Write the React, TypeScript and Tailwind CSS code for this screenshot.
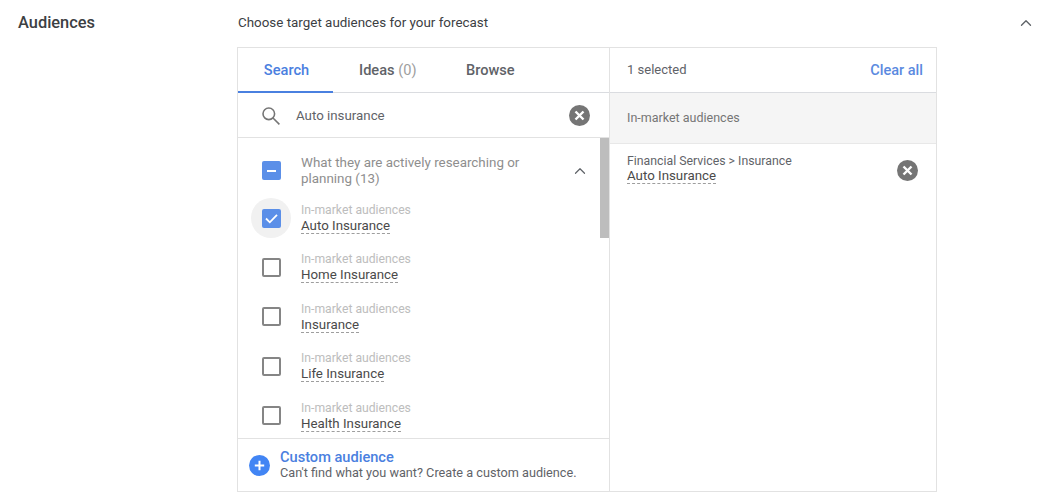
import { ChevronUp } from "lucide-react";

const items = [
  { name: "Auto Insurance", checked: true },
  { name: "Home Insurance", checked: false },
  { name: "Insurance", checked: false },
  { name: "Life Insurance", checked: false },
  { name: "Health Insurance", checked: false },
];

function CloseCircle() {
  return (
    <svg width="21" height="21" viewBox="0 0 21 21">
      <circle cx="10.5" cy="10.5" r="10.5" fill="#757575" />
      <path d="M6.5 6.5l8 8M14.5 6.5l-8 8" stroke="#fff" strokeWidth="2.4" fill="none" />
    </svg>
  );
}

function SearchIcon() {
  return (
    <svg width="20" height="20" viewBox="0 0 20 20" fill="none" stroke="#757575" strokeWidth="1.6">
      <circle cx="7.8" cy="7.8" r="5.8" />
      <path d="M12 12l6.4 6.4" />
    </svg>
  );
}

function Checkbox({ checked }: { checked: boolean }) {
  if (checked) {
    return (
      <div className="w-10 h-10 rounded-full bg-[#f1f1f1] flex items-center justify-center">
        <div className="w-[19px] h-[19px] rounded-[2px] bg-[#5b8fe8] flex items-center justify-center">
          <svg width="13" height="11" viewBox="0 0 13 11" fill="none" stroke="#fff" strokeWidth="1.8">
            <path d="M1 5.5l3.8 3.8L12 1.8" />
          </svg>
        </div>
      </div>
    );
  }
  return (
    <div className="w-10 h-10 flex items-center justify-center">
      <div className="w-[19px] h-[19px] rounded-[2px] border-2 border-[#858585]" />
    </div>
  );
}

export default function App() {
  return (
    <div className="w-[1046px] h-[496px] overflow-hidden bg-white font-['Roboto',sans-serif] flex">
      <div className="w-[238px] pl-[18px] pt-[13px] text-[16.4px] leading-[19px] font-medium text-[#3c4043]">Audiences</div>

      <div className="w-[699px] pt-[14px]">
        <div className="text-[13.4px] leading-[18px] text-[#3c4043]">Choose target audiences for your forecast</div>

        <div className="ml-[-1px] mt-[15px] w-[700px] h-[445px] border border-[#e2e2e2] flex">
          <div className="w-[372px] border-r border-[#e2e2e2] flex flex-col">
            <div className="h-[45px] flex border-b border-[#dadce0] text-[14.6px] font-medium text-[#5f6368] shrink-0">
              <div className="w-[95px] h-[45px] pl-[2px] pt-[2px] border-b-2 border-[#4a80e0] text-[#4a80e0] flex items-center justify-center">Search</div>
              <div className="ml-[26px] pt-[2px] w-[107px] flex items-center">
                Ideas&nbsp;<span className="font-normal text-[#9e9e9e]">(0)</span>
              </div>
              <div className="flex pt-[2px] items-center">Browse</div>
            </div>

            <div className="h-[45px] flex items-center border-b border-[#e2e2e2] pt-[1px] shrink-0">
              <div className="ml-[23px] w-[35px]"><SearchIcon /></div>
              <div className="text-[13.3px] text-[#5f6368] flex-1">Auto insurance</div>
              <div className="mr-[19px]"><CloseCircle /></div>
            </div>

            <div className="relative flex-1 overflow-hidden">
              <div className="absolute right-0 top-0 w-[9px] h-[100px] bg-[#bdbdbd]" />
              <div className="h-[60px] flex items-center pl-[24px] pt-[5px]">
                <div className="w-[19px] h-[19px] rounded-[2px] bg-[#5b8fe8] flex items-center justify-center">
                  <div className="w-[9px] h-[2px] bg-white" />
                </div>
                <div className="ml-[20px] w-[240px] text-[13.4px] leading-[16px] text-[#8e8e8e]">
                  What they are actively researching or planning (13)
                </div>
                <ChevronUp size={18} strokeWidth={1.6} className="ml-[30px] text-[#5f6368]" />
              </div>
              <div className="flex flex-col gap-[9.45px]">
                {items.map((item) => (
                  <div key={item.name} className="h-10 flex items-center pl-[13px]">
                    <Checkbox checked={item.checked} />
                    <div className="ml-[10px]">
                      <div className="text-[12.2px] leading-4 text-[#bdbdbd]">In-market audiences</div>
                      <div className="w-fit text-[13.3px] leading-[15px] text-[#4a4a4a] border-b border-dashed border-[#9e9e9e]">{item.name}</div>
                    </div>
                  </div>
                ))}
              </div>
            </div>

            <div className="h-[53px] border-t border-[#e2e2e2] flex items-center pl-[11px] shrink-0">
              <svg width="21" height="21" viewBox="0 0 21 21">
                <circle cx="10.5" cy="10.5" r="10.5" fill="#4285f4" />
                <path d="M10.5 5.8v9.4M5.8 10.5h9.4" stroke="#fff" strokeWidth="2" fill="none" />
              </svg>
              <div className="ml-[10px]">
                <div className="text-[14.6px] leading-[15px] font-medium text-[#4a80e0]">Custom audience</div>
                <div className="text-[12.7px] leading-[16px] text-[#5f6368]">Can't find what you want? Create a custom audience.</div>
              </div>
            </div>
          </div>

          <div className="flex-1 flex flex-col">
            <div className="h-[45px] flex items-center justify-between pl-[17px] pr-[13px] border-b border-[#dadce0]">
              <span className="text-[13px] text-[#5f6368]">1 selected</span>
              <span className="pt-[1px] text-[14.5px] font-medium text-[#5b8ae0]">Clear all</span>
            </div>
            <div className="h-[51px] flex items-center pl-[17px] bg-[#f5f5f5] border-b border-[#e8e8e8] text-[12.5px] text-[#757575]">In-market audiences</div>
            <div className="flex items-start justify-between pl-[17px] pr-[19px] pt-[9px]">
              <div>
                <div className="text-[12.3px] leading-4 text-[#5f6368]">Financial Services &gt; Insurance</div>
                <div className="w-fit mt-[-1px] text-[13.3px] leading-[15px] text-[#4a4a4a] border-b border-dashed border-[#9e9e9e]">Auto Insurance</div>
              </div>
              <div className="pt-[7px] mr-[-1px]"><CloseCircle /></div>
            </div>
          </div>
        </div>
      </div>

      <div className="pl-[80px] pt-[14px]">
        <ChevronUp size={18} strokeWidth={1.8} className="text-[#5f6368]" />
      </div>
    </div>
  );
}
